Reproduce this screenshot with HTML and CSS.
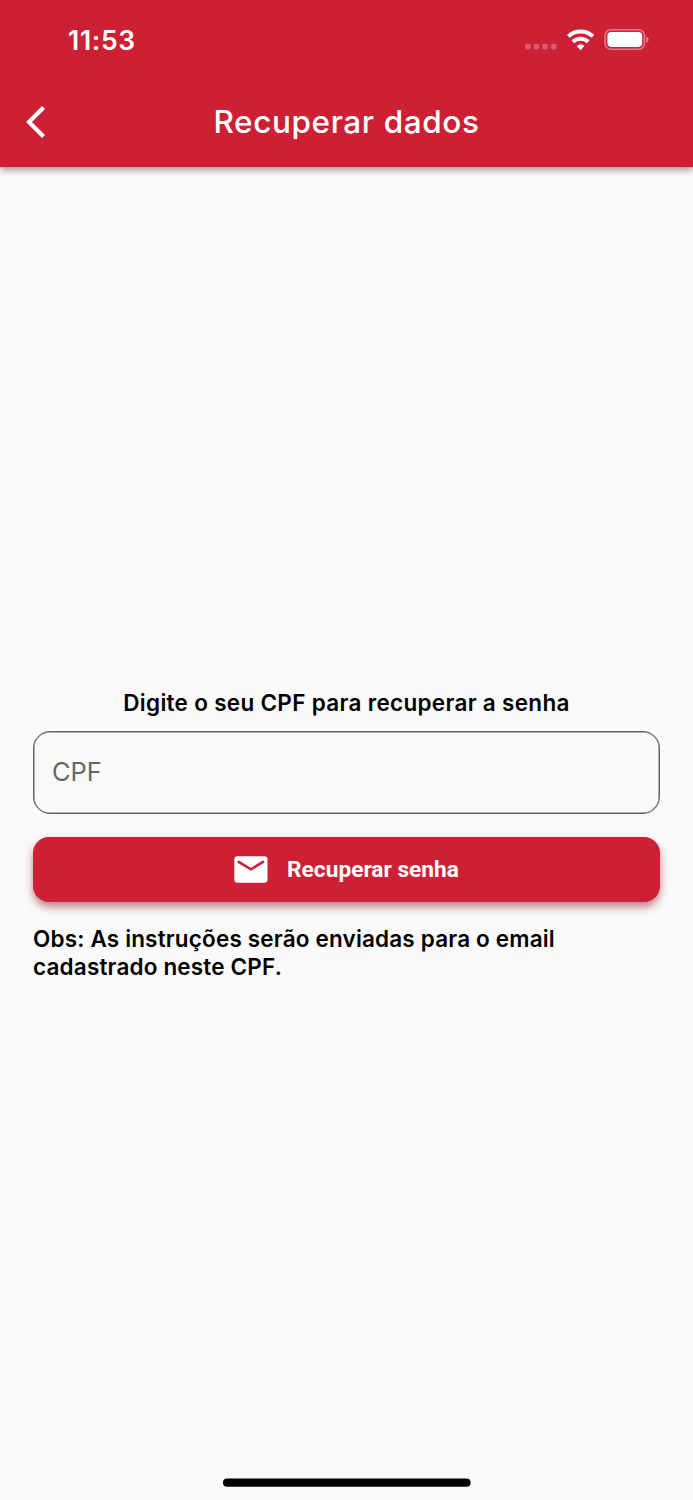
FILE: index.html
```html
<!DOCTYPE html>
<html lang="pt-BR">
<head>
  <meta charset="UTF-8" />
  <title>Recuperar dados</title>
  <meta name="viewport" content="width=device-width, initial-scale=1.0" />
  <link rel="stylesheet" href="styles.css">
</head>
<body>
  <header class="header">
    <!-- Barra de status -->
    <div class="status-bar">
      <span class="time">11:53</span>
      <svg class="status-icons" width="126" height="26" viewBox="0 0 126 26">
        <g fill="#fff" fill-opacity="0.27">
          <rect x="0.2" y="16.8" width="5.6" height="5.6" rx="1.8" />
          <rect x="8.7" y="16.8" width="5.6" height="5.6" rx="1.8" />
          <rect x="17.2" y="16.8" width="5.6" height="5.6" rx="1.8" />
          <rect x="25.8" y="16.8" width="5.6" height="5.6" rx="1.8" />
        </g>
        <g fill="none" stroke="#fff" stroke-width="4">
          <path d="M43.3 9.4a18 18 0 0 1 24.6 0" />
          <path d="M47.9 14.7a11.4 11.4 0 0 1 15.4 0" />
        </g>
        <path d="M51.8 18.9a5.9 5.9 0 0 1 7.6 0l-3.1 3.6q-.7.8-1.4 0z" fill="#fff" />
        <rect x="80.1" y="2.8" width="39.4" height="19.4" rx="5.8" fill="none" stroke="#fff" stroke-opacity="0.4" stroke-width="1.6" />
        <rect x="82.4" y="5.1" width="34.8" height="14.8" rx="3.8" fill="#fff" />
        <path d="M121.3 9.7c3 1 3 4.8 0 5.8z" fill="#fff" fill-opacity="0.45" />
      </svg>
    </div>

    <!-- Barra de título -->
    <div class="app-bar">
      <button class="back" aria-label="Voltar">
        <svg width="20" height="34" viewBox="0 0 20 34">
          <path d="M17.5 2.4 3 17l14.5 14.4" fill="none" stroke="#fff" stroke-width="4.2" />
        </svg>
      </button>
      <h1>Recuperar dados</h1>
    </div>
  </header>

  <!-- Formulário -->
  <main class="content">
    <label class="label" for="cpf">Digite o seu CPF para recuperar a senha</label>
    <input class="field" type="text" id="cpf" placeholder="CPF">
    <button class="submit">
      <svg width="34" height="27" viewBox="0 0 34 27">
        <rect x="0.3" y="0.2" width="33.2" height="26.6" rx="3.2" fill="#fff" />
        <path d="M4.7 5.8 16.9 13.3 29.1 5.8" fill="none" stroke="#ce2035" stroke-width="2.6" stroke-linecap="round" />
      </svg>
      <span>Recuperar senha</span>
    </button>
    <p class="note">Obs: As instruções serão enviadas para o email<br>cadastrado neste CPF.</p>
  </main>

  <footer class="home">
    <svg width="248" height="9" viewBox="0 0 248 9">
      <rect x="0" y="0.5" width="247.6" height="8.3" rx="4.1" />
    </svg>
  </footer>
</body>
</html>
```

FILE: styles.css
```css
* {
  box-sizing: border-box;
}

body {
  margin: 0;
  height: 1500px;
  display: flex;
  flex-direction: column;
  background: #fafafa;
  color: #000;
  font-family: Inter, sans-serif;
}

button {
  border: none;
  padding: 0;
  cursor: pointer;
}

svg {
  display: block;
}

/* Cabeçalho */
.header {
  height: 167px;
  background: #ce2035;
  color: #fff;
  box-shadow: 0 3px 7px rgba(0,0,0,0.4);
}

.status-bar {
  height: 76px;
  padding: 3px 42px 0 68px;
  display: flex;
  justify-content: space-between;
  align-items: center;
}

.time {
  font-size: 26.5px;
  font-weight: 600;
  letter-spacing: 0.7px;
}

.app-bar {
  height: 91px;
  display: grid;
  grid-template-columns: 80px 1fr 80px;
  align-items: center;
}

.back {
  margin-left: 26px;
  width: 20px;
  background: none;
}

h1 {
  margin: 0;
  font-size: 31.5px;
  font-weight: 500;
  letter-spacing: 0.6px;
  text-align: center;
}

/* Conteúdo */
.content {
  flex: 1;
  padding: 522px 33px 0;
  display: flex;
  flex-direction: column;
}

.label {
  height: 28px;
  line-height: 28px;
  font-size: 22.5px;
  font-weight: 600;
  letter-spacing: 0.3px;
  text-align: center;
  white-space: nowrap;
}

.field {
  height: 83px;
  margin-top: 14px;
  padding: 0 18px 2px;
  border: 1px solid #636363;
  border-radius: 17px;
  background: transparent;
  box-shadow: inset 0 0 0 0.5px #636363;
  font-family: inherit;
  font-size: 25.4px;
}
.field::placeholder {
  color: #666;
  opacity: 1;
}

.submit {
  height: 65px;
  margin-top: 22.5px;
  display: flex;
  justify-content: center;
  align-items: center;
  gap: 19px;
  border-radius: 16px;
  background: #ce2035;
  color: #fff;
  font-family: Roboto, sans-serif;
  font-size: 22.7px;
  font-weight: 700;
  box-shadow: 0 5px 9px rgba(130,10,25,0.5);
}

.note {
  margin: 23.5px 0 0;
  font-size: 22.5px;
  font-weight: 600;
  letter-spacing: 0.17px;
  line-height: 27.5px;
  white-space: nowrap;
}

/* Indicador inferior */
.home {
  height: 22px;
  display: flex;
  justify-content: center;
}
```
